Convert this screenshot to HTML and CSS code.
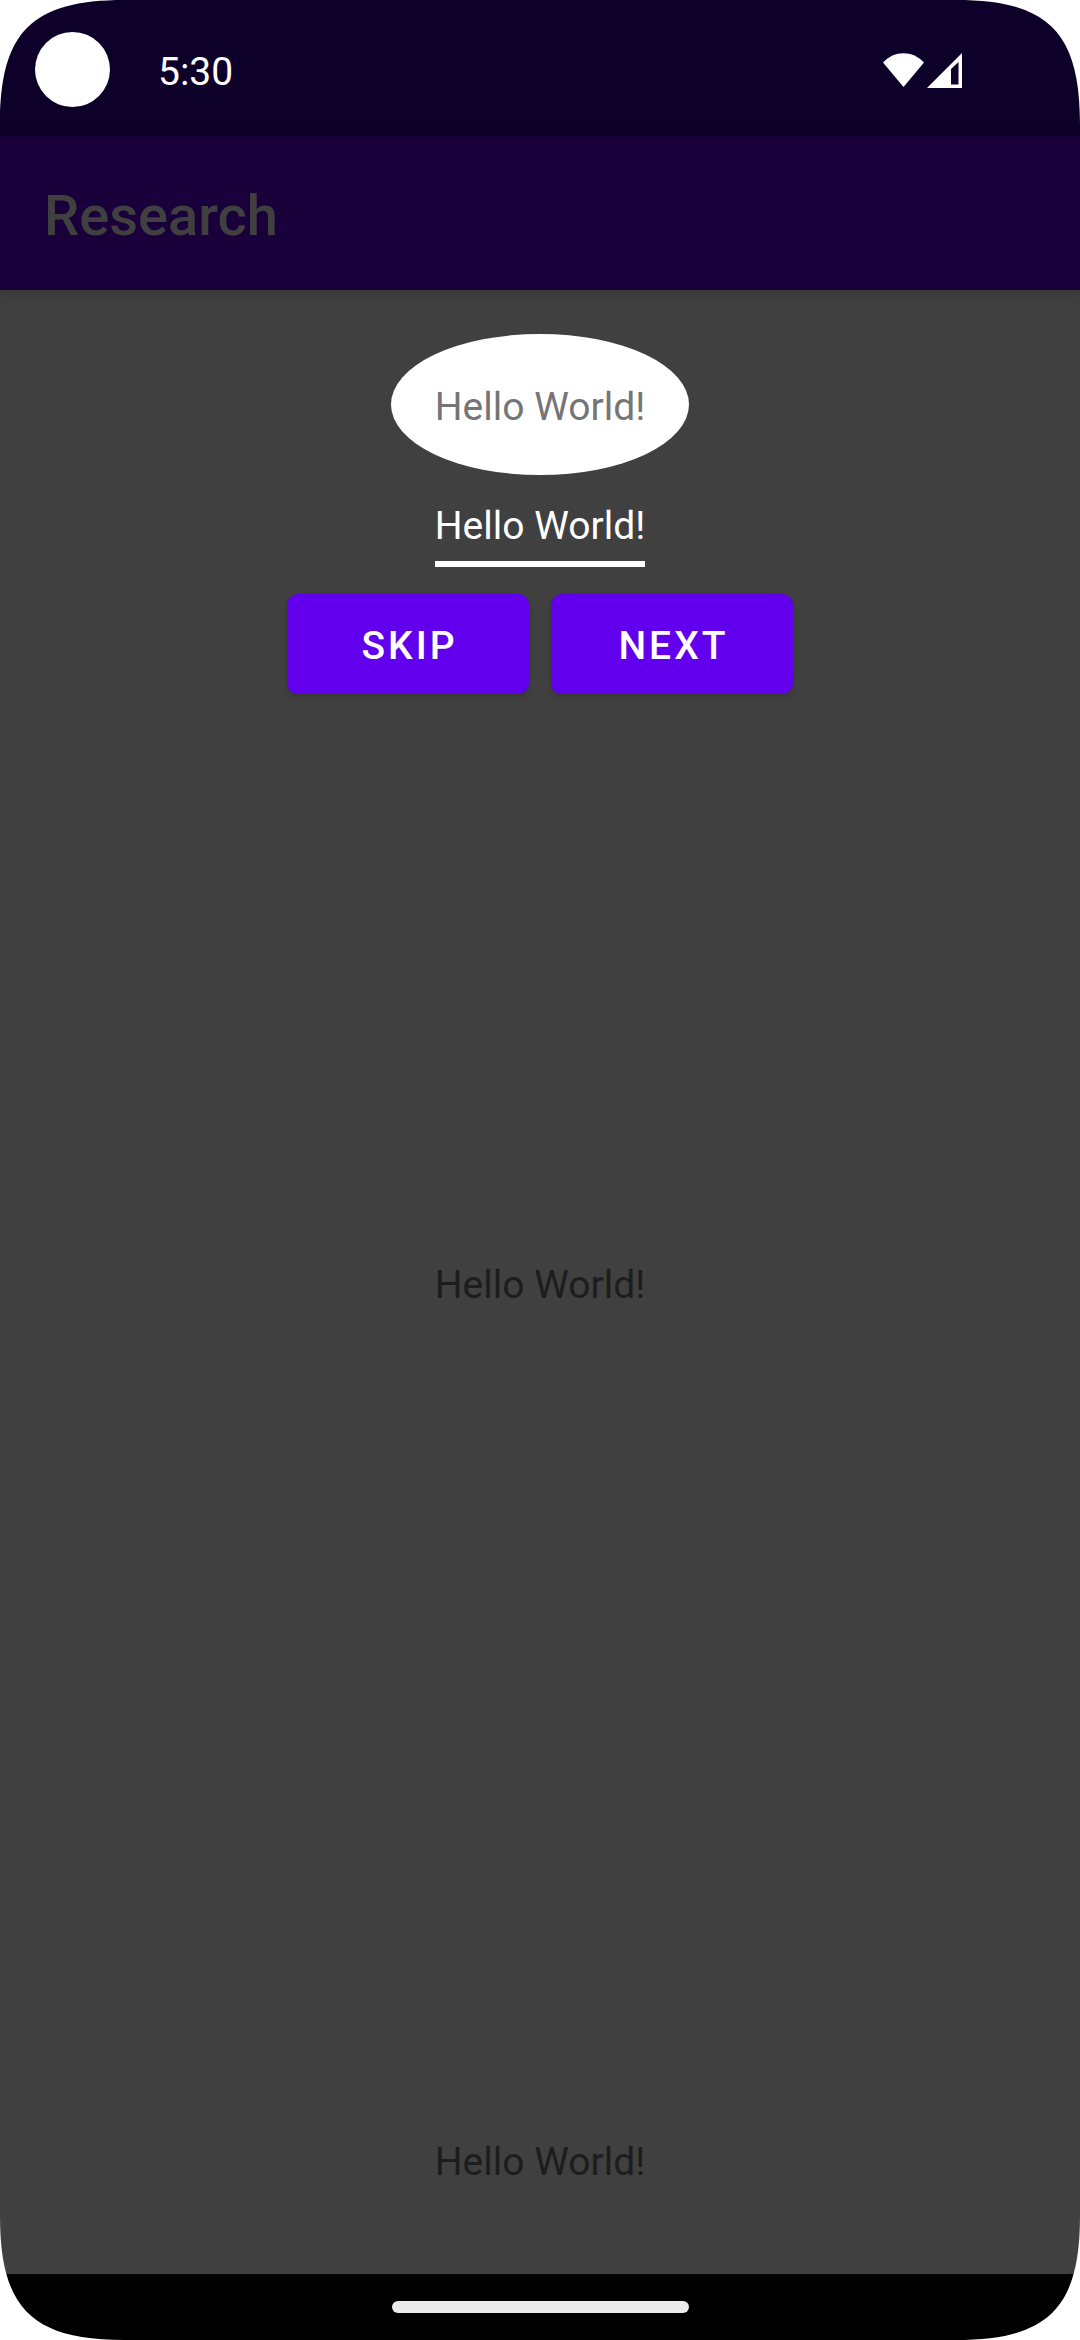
FILE: index.html
```html
<!DOCTYPE html>
<html lang="en">
<head>
<meta charset="utf-8">
<meta name="viewport" content="width=device-width, initial-scale=1">
<title>Research</title>
<link rel="stylesheet" href="styles.css">
</head>
<body>
<div class="device">
  <div class="status-bar">
    <span class="camera"></span>
    <time class="clock">5:30</time>
    <div class="status-icons">
      <svg class="wifi" viewBox="0 0 41 34" aria-hidden="true"><path d="M0 9.500C11-3 30-3 41 9.500L20.500 34z"/></svg>
      <svg class="signal" viewBox="0 0 35 35" aria-hidden="true"><path fill-rule="evenodd" d="M35 0V35H0zM31.500 9L24 16V31.500H31.500z"/></svg>
    </div>
  </div>
  <header class="app-bar"><h1 class="title">Research</h1></header>
  <main class="content">
    <div class="page">
      <p class="label page-center">Hello World!</p>
      <p class="label page-bottom">Hello World!</p>
    </div>
    <section class="tour" aria-label="Tour">
      <div class="spotlight"><p class="label">Hello World!</p></div>
      <div class="hint"><p class="label">Hello World!</p></div>
      <div class="actions">
        <button class="button" type="button">SKIP</button>
        <button class="button" type="button">NEXT</button>
      </div>
    </section>
  </main>
  <footer class="nav-bar"><span class="handle"></span></footer>
  <svg class="corner top-left" viewBox="0 0 124 124" aria-hidden="true"><path d="M0 0H124C32 0 0 32 0 124z"/></svg>
  <svg class="corner top-right" viewBox="0 0 124 124" aria-hidden="true"><path d="M0 0H124C32 0 0 32 0 124z"/></svg>
  <svg class="corner bottom-left" viewBox="0 0 124 124" aria-hidden="true"><path d="M0 0H124C32 0 0 32 0 124z"/></svg>
  <svg class="corner bottom-right" viewBox="0 0 124 124" aria-hidden="true"><path d="M0 0H124C32 0 0 32 0 124z"/></svg>
</div>
</body>
</html>
```
FILE: styles.css
```css
* {
  box-sizing: border-box;
}

body {
  margin: 0;
  background: #fff;
  font-family: Roboto, "Liberation Sans", sans-serif;
}

.device {
  position: relative;
  display: flex;
  flex-direction: column;
  min-height: 100vh;
  background: #404040;
}

.status-bar {
  display: flex;
  align-items: center;
  height: 136px;
  padding: 3px 118px 0 35px;
  background: #0d0029;
  color: #fff;
}

.camera {
  width: 75px;
  height: 75px;
  border-radius: 50%;
  background: #fff;
}

.clock {
  margin-left: 48px;
  padding-top: 6px;
  font-size: 39px;
  line-height: 47px;
}

.status-icons {
  display: flex;
  gap: 3px;
  margin-left: auto;
  padding-top: 2px;
}

.wifi {
  width: 41px;
  height: 34px;
  fill: #fff;
}

.signal {
  width: 35px;
  height: 35px;
  fill: #fff;
}

.app-bar {
  display: flex;
  align-items: center;
  height: 154px;
  padding: 6px 44px 0;
  background: #1a003b;
  box-shadow: 0 2px 12px rgba(0, 0, 0, 0.2);
}

.title {
  margin: 0;
  color: #404040;
  font-size: 56px;
  font-weight: 500;
  line-height: 72px;
}

.content {
  display: grid;
  flex: 1;
}

.page,
.tour {
  grid-area: 1 / 1;
}

.label {
  margin: 0;
  padding-top: 6px;
  font-size: 39px;
  line-height: 47px;
}

.page {
  display: grid;
  grid-template-rows: 1fr auto 1fr;
  justify-items: center;
  color: #1d1d1d;
}

.page-center {
  grid-row: 2;
}

.page-bottom {
  grid-row: 3;
  align-self: end;
  margin-bottom: 88px;
}

.tour {
  display: flex;
  flex-direction: column;
  align-items: center;
  padding-top: 44px;
}

.spotlight {
  padding: 44px;
  border-radius: 50%;
  background: #fff;
  color: #757575;
}

.hint {
  margin-top: 22px;
  padding-bottom: 11px;
  border-bottom: 6px solid #fff;
  color: #fff;
}

.actions {
  display: flex;
  gap: 22px;
  margin-top: 27px;
}

.button {
  width: 242px;
  height: 100px;
  padding: 3px 0 0 3px;
  border: 0;
  border-radius: 11px;
  background: #6200ee;
  box-shadow: 0 3px 6px rgba(0, 0, 0, 0.15);
  color: #fff;
  font-family: inherit;
  font-size: 39px;
  font-weight: 500;
  letter-spacing: 3px;
}

.nav-bar {
  display: flex;
  align-items: center;
  justify-content: center;
  height: 66px;
  background: #000;
}

.handle {
  width: 297px;
  height: 12px;
  border-radius: 6px;
  background: #ebebeb;
}

.corner {
  position: absolute;
  width: 124px;
  height: 124px;
  fill: #fff;
}

.top-left {
  top: 0;
  left: 0;
}

.top-right {
  top: 0;
  right: 0;
  transform: scaleX(-1);
}

.bottom-left {
  bottom: 0;
  left: 0;
  transform: scaleY(-1);
}

.bottom-right {
  right: 0;
  bottom: 0;
  transform: scale(-1);
}
```
